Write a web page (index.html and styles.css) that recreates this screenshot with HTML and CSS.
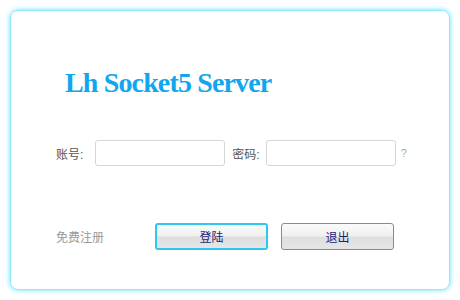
FILE: index.html
```html
<!DOCTYPE html>
<html lang="zh">
<head>
    <meta charset="UTF-8">
    <title>Lh Socket5 Server</title>
    <link rel="stylesheet" href="styles.css">
</head>
<body>
    <div class="panel">
        <h1 class="title">Lh Socket5 Server</h1>
        <div class="row">
            <label for="user" class="lbl-user">账号:</label>
            <input type="text" id="user" class="field">
            <label for="pass" class="lbl-pass">密码:</label>
            <input type="password" id="pass" class="field">
            <span class="help">?</span>
        </div>
        <div class="row actions">
            <a class="reg">免费注册</a>
            <button class="btn btn-login">登陆</button>
            <button class="btn">退出</button>
        </div>
    </div>
</body>
</html>
```

FILE: styles.css
```css
body {
    margin: 0;
    background-color: #ffffff;
    font-family: 'Liberation Sans', 'Noto Sans CJK SC', sans-serif;
}

.panel {
    box-sizing: border-box;
    margin: 10px;
    width: 440px;
    height: 280px;
    border: 1px solid #8fe8fb;
    border-radius: 8px;
    box-shadow: 0 0 4px 1px #8ee9ff;
    padding: 56px 0 0 45px;
}

.title {
    margin: 0 0 0 9px;
    font-family: 'Liberation Serif', serif;
    font-size: 28px;
    font-weight: bold;
    color: #12a6ee;
    letter-spacing: -0.85px;
    line-height: 32px;
}

.row {
    display: flex;
    align-items: center;
    margin-top: 41px;
    font-size: 12px;
    color: #555;
}

.lbl-user {
    margin-right: 12px;
}

.lbl-pass {
    margin-right: 6px;
}

.field {
    box-sizing: border-box;
    width: 130px;
    height: 26px;
    border: 1px solid #d6d6d6;
    border-radius: 3px;
    margin-right: 7px;
}

.help {
    color: #aaa;
    font-size: 11px;
    margin-left: -2px;
}

.actions {
    margin-top: 57px;
}

.reg {
    color: #999;
    width: 99px;
}

.btn {
    box-sizing: border-box;
    width: 113px;
    height: 27px;
    margin-right: 13px;
    border: 1px solid #8a8a8a;
    border-radius: 3px;
    background: linear-gradient(#fafafa, #f0f0f0 48%, #dedede 52%, #e6e6e6);
    color: #15267a;
    font-family: 'Liberation Sans', 'Noto Sans CJK SC', sans-serif;
    font-size: 12px;
}

.btn-login {
    border: 2px solid #2fc6f0;
}
```
